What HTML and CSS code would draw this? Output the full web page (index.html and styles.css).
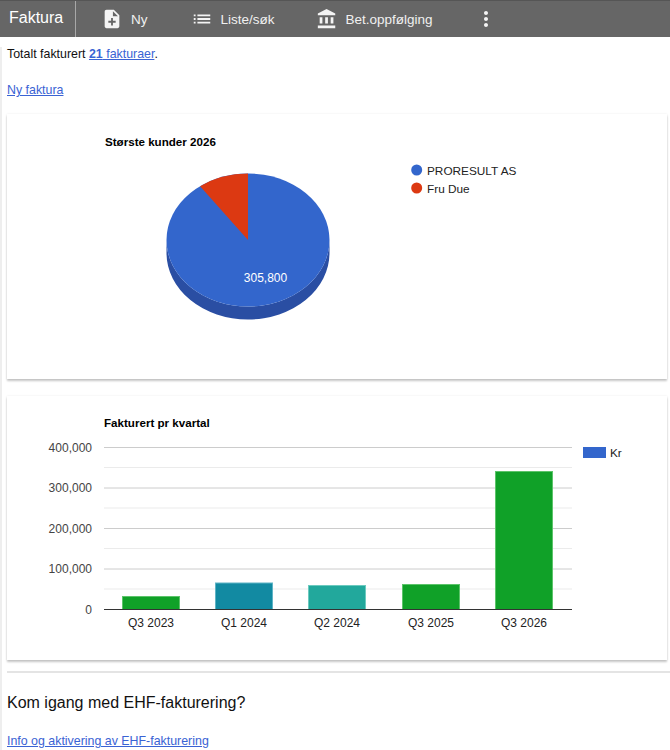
FILE: index.html
```html
<!DOCTYPE html>
<html lang="no">
<head>
<meta charset="utf-8">
<title>Faktura</title>
<link rel="stylesheet" href="styles.css">
</head>
<body>
<header class="topbar">
  <div class="brand">Faktura</div>
  <nav class="nav">
    <a class="nav-item item-ny" href="#">
      <svg class="icon" viewBox="0 0 24 24"><path d="M14 2H6c-1.1 0-1.99.9-1.99 2L4 20c0 1.1.89 2 1.99 2H18c1.1 0 2-.9 2-2V8l-6-6zm2 14h-3v3h-2v-3H8v-2h3v-3h2v3h3v2zm-3-7V3.5L18.5 9H13z"/></svg>
      <span>Ny</span>
    </a>
    <a class="nav-item item-liste" href="#">
      <svg class="icon" viewBox="0 0 24 24"><path d="M3 13h2v-2H3v2zm0 4h2v-2H3v2zm0-8h2V7H3v2zm4 4h14v-2H7v2zm0 4h14v-2H7v2zM7 7v2h14V7H7z"/></svg>
      <span>Liste/søk</span>
    </a>
    <a class="nav-item item-bet" href="#">
      <svg class="icon" viewBox="0 0 24 24"><path d="M4 10v7h3v-7H4zm6 0v7h3v-7h-3zM2 22h19v-3H2v3zm14-12v7h3v-7h-3zm-4.5-9L2 6v2h19V6l-9.5-5z"/></svg>
      <span>Bet.oppfølging</span>
    </a>
    <a class="nav-item item-more" href="#">
      <svg class="icon" viewBox="0 0 24 24"><path d="M12 8c1.1 0 2-.9 2-2s-.9-2-2-2-2 .9-2 2 .9 2 2 2zm0 2c-1.1 0-2 .9-2 2s.9 2 2 2 2-.9 2-2-.9-2-2-2zm0 6c-1.1 0-2 .9-2 2s.9 2 2 2 2-.9 2-2-.9-2-2-2z"/></svg>
    </a>
  </nav>
</header>

<main class="content">
  <p class="summary">Totalt fakturert <a href="#" class="link"><b>21</b> fakturaer</a>.</p>
  <p class="newlink"><a href="#" class="link">Ny faktura</a></p>

  <section class="card card-pie">
    <svg class="chart" width="660" height="265" viewBox="0 0 660 265">
      <text x="98" y="32" class="chart-title">Største kunder 2026</text>
      <path d="M159.5 126 A81.5 66.5 0 0 0 322.5 126 L322.5 139 A81.5 66.5 0 0 1 159.5 139 Z" fill="#2a4ea3"/>
      <ellipse cx="241" cy="126" rx="81.5" ry="66.5" fill="#3366cc"/>
      <path d="M241 126 L241 59.5 A81.5 66.5 0 0 0 193.1 72.2 Z" fill="#dc3912"/>
      <text x="258.5" y="168" class="pie-label">305,800</text>
      <circle cx="409.7" cy="56" r="5.5" fill="#3366cc"/>
      <text x="420" y="60.5" class="legend-text">PRORESULT AS</text>
      <circle cx="409.7" cy="74" r="5.5" fill="#dc3912"/>
      <text x="420" y="78.5" class="legend-text">Fru Due</text>
    </svg>
  </section>

  <section class="card card-bar">
    <svg class="chart" width="660" height="264" viewBox="0 0 660 264">
      <text x="97" y="31" class="chart-title">Fakturert pr kvartal</text>
      <g class="grid-minor">
        <line x1="97" x2="565" y1="71.5" y2="71.5"/>
        <line x1="97" x2="565" y1="112" y2="112"/>
        <line x1="97" x2="565" y1="152.5" y2="152.5"/>
        <line x1="97" x2="565" y1="193" y2="193"/>
      </g>
      <g class="grid-major">
        <line x1="97" x2="565" y1="51.5" y2="51.5"/>
        <line x1="97" x2="565" y1="92" y2="92"/>
        <line x1="97" x2="565" y1="132.5" y2="132.5"/>
        <line x1="97" x2="565" y1="173" y2="173"/>
      </g>
      <g class="ylabels">
        <text x="85" y="55.5">400,000</text>
        <text x="85" y="96">300,000</text>
        <text x="85" y="136.5">200,000</text>
        <text x="85" y="177">100,000</text>
        <text x="85" y="217.5">0</text>
      </g>
      <rect x="115.5" y="200.5" width="57" height="13" fill="#10a128" stroke="#5cc46a"/>
      <rect x="208.5" y="187" width="57" height="26.5" fill="#128aa2" stroke="#5fb4c6"/>
      <rect x="301.5" y="189.5" width="57" height="24" fill="#22a89c" stroke="#6ccabf"/>
      <rect x="395.5" y="188.5" width="57" height="25" fill="#10a128" stroke="#5cc46a"/>
      <rect x="488.5" y="75.5" width="57" height="138" fill="#10a128" stroke="#5cc46a"/>
      <line x1="97" x2="565" y1="213.5" y2="213.5" class="baseline"/>
      <g class="xlabels">
        <text x="144" y="231">Q3 2023</text>
        <text x="237" y="231">Q1 2024</text>
        <text x="330" y="231">Q2 2024</text>
        <text x="424" y="231">Q3 2025</text>
        <text x="517" y="231">Q3 2026</text>
      </g>
      <rect x="576" y="51" width="23" height="11" fill="#3366cc"/>
      <text x="603" y="61" class="legend-text">Kr</text>
    </svg>
  </section>

  <hr class="divider">
  <h2 class="ehf-title">Kom igang med EHF-fakturering?</h2>
  <p class="ehf-link"><a href="#" class="link">Info og aktivering av EHF-fakturering</a></p>
</main>
</body>
</html>
```

FILE: styles.css
```css
html, body {
  margin: 0;
  padding: 0;
  background: #ffffff;
  font-family: "Liberation Sans", Arial, sans-serif;
  color: #111111;
}

.topbar {
  display: flex;
  align-items: stretch;
  height: 37px;
  background: #666666;
  border-top: 1px solid #555555;
  box-sizing: border-box;
  color: #f2f2f2;
}

.brand {
  width: 66px;
  padding-left: 9px;
  border-right: 1px solid #a8a8a8;
  font-size: 16px;
  line-height: 33px;
  color: #ffffff;
}

.nav {
  display: flex;
  align-items: center;
}

.nav-item {
  display: flex;
  align-items: center;
  gap: 8px;
  color: #f0f0f0;
  text-decoration: none;
  font-size: 13.5px;
}

.icon {
  width: 22px;
  height: 22px;
  fill: #f4f4f4;
}

.item-ny { margin-left: 25px; }
.item-liste { margin-left: 43px; }
.item-bet { margin-left: 41px; }
.item-more { margin-left: 41px; }
.item-more .icon { width: 24px; height: 24px; }

.content {
  border-left: 2px solid #eeeeee;
  padding-left: 5px;
  padding-bottom: 20px;
  font-size: 12.4px;
}

.summary {
  margin: 10px 0 0;
  line-height: 15px;
}

.newlink {
  margin: 21px 0 0;
  line-height: 15px;
}

.link {
  color: #3a63d4;
  text-decoration: underline;
}

.card {
  width: 660px;
  background: #ffffff;
  box-shadow: 0 2px 2px rgba(0, 0, 0, 0.22), 0 0 2px rgba(0, 0, 0, 0.08);
}

.card-pie {
  margin-top: 16px;
  height: 265px;
}

.card-bar {
  margin-top: 17px;
  height: 264px;
}

.chart {
  display: block;
  font-family: "Liberation Sans", Arial, sans-serif;
}

.chart-title {
  font-size: 11.6px;
  font-weight: bold;
  fill: #000000;
}

.pie-label {
  font-size: 12px;
  fill: #ffffff;
  text-anchor: middle;
}

.legend-text {
  font-size: 11.8px;
  fill: #222222;
}

.grid-major line {
  stroke: #cccccc;
  stroke-width: 1;
}

.grid-minor line {
  stroke: #ebebeb;
  stroke-width: 1;
}

.baseline {
  stroke: #333333;
  stroke-width: 1;
}

.ylabels text {
  font-size: 12px;
  fill: #444444;
  text-anchor: end;
}

.xlabels text {
  font-size: 12px;
  fill: #222222;
  text-anchor: middle;
}

.divider {
  margin: 11px 0 0;
  border: 0;
  height: 2px;
  background: #e4e4e4;
}

.ehf-title {
  margin: 21px 0 0;
  font-size: 16px;
  font-weight: normal;
  line-height: 18px;
  color: #111111;
}

.ehf-link {
  margin: 22px 0 0;
  line-height: 15px;
}
```
